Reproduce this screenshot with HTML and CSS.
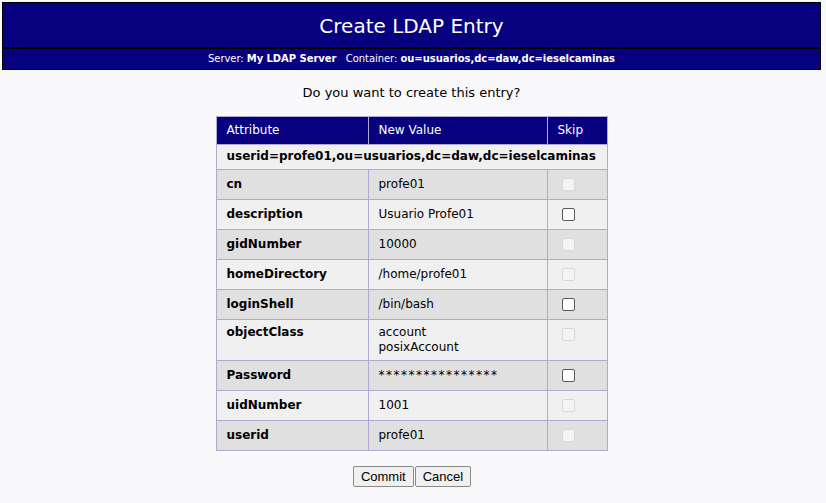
FILE: index.html
```html
<!DOCTYPE html>
<html>
<head>
<meta charset="utf-8">
<link rel="stylesheet" href="styles.css">
</head>
<body>
<div class="head">
  <div class="title">Create LDAP Entry</div>
  <div class="sub">Server: <b>My LDAP Server</b> &nbsp; Container: <b>ou=usuarios,dc=daw,dc=ieselcaminas</b></div>
</div>
<p class="question">Do you want to create this entry?</p>
<table class="entry">
  <colgroup><col class="w1"><col class="w2"><col class="w3"></colgroup>
  <tr class="th"><td>Attribute</td><td>New Value</td><td>Skip</td></tr>
  <tr class="dn"><td colspan="3">userid=profe01,ou=usuarios,dc=daw,dc=ieselcaminas</td></tr>
  <tr class="dark"><td class="c1">cn</td><td>profe01</td><td><span class="cb dis"></span></td></tr>
  <tr class="light"><td class="c1">description</td><td>Usuario Profe01</td><td><span class="cb"></span></td></tr>
  <tr class="dark"><td class="c1">gidNumber</td><td>10000</td><td><span class="cb dis"></span></td></tr>
  <tr class="light"><td class="c1">homeDirectory</td><td>/home/profe01</td><td><span class="cb dis"></span></td></tr>
  <tr class="dark"><td class="c1">loginShell</td><td>/bin/bash</td><td><span class="cb"></span></td></tr>
  <tr class="light tall"><td class="c1">objectClass</td><td>account<br>posixAccount</td><td><span class="cb dis"></span></td></tr>
  <tr class="dark"><td class="c1">Password</td><td class="pw">****************</td><td><span class="cb"></span></td></tr>
  <tr class="light"><td class="c1">uidNumber</td><td>1001</td><td><span class="cb dis"></span></td></tr>
  <tr class="dark"><td class="c1">userid</td><td>profe01</td><td><span class="cb dis"></span></td></tr>
</table>
<div class="buttons"><button class="btn">Commit</button><button class="btn">Cancel</button></div>
</body>
</html>
```
FILE: styles.css
```css
html, body { margin: 0; padding: 0; }
body {
  background: #f9f9fc;
  font-family: "DejaVu Sans", Verdana, sans-serif;
  color: #000;
  padding: 2px 5px 0 2px;
}
.head {
  background: #07007f;
  border: 1px solid #000;
  color: #fff;
}
.title {
  height: 44px;
  border-bottom: 2px solid #000;
  font-size: 20px;
  line-height: 46px;
  text-align: center;
}
.sub {
  height: 20px;
  font-size: 10px;
  line-height: 20px;
  text-align: center;
  letter-spacing: -0.05px;
}
.question {
  margin: 15px 0 0;
  font-size: 13px;
  line-height: 16px;
  text-align: center;
}
.entry {
  margin: 15px auto 0;
  border-collapse: collapse;
  table-layout: fixed;
  font-size: 12px;
  width: 391px;
}
.w1 { width: 152px; }
.w2 { width: 179px; }
.w3 { width: 60px; }
.entry td {
  border: 1px solid #aeaad2;
  padding: 0 10px 2px;
  height: 27px;
  vertical-align: middle;
  overflow: visible;
  white-space: nowrap;
}
.entry .c1 { font-weight: bold; }
.th td {
  background: #07007f;
  color: #fff;
  height: 25px;
}
.dn td {
  background: #f0f0f0;
  font-weight: bold;
  height: 22px;
  font-size: 12px;
}
.dark td { background: #e0e0e0; }
.light td { background: #f0f0f0; }
.tall td {
  height: 35px;
  vertical-align: top;
  padding-top: 5px;
  padding-bottom: 0;
  line-height: 15px;
}
.pw { letter-spacing: 1.5px; }
.cb {
  display: block;
  width: 11px;
  height: 11px;
  margin: 1px 0 0 4px;
  border: 1px solid #5a5a5a;
  border-radius: 2px;
  background: #fff;
}
.cb.dis { border-color: #d8d8d8; background: #f4f4f4; }
.tall .cb { margin-top: 3px; }
.buttons {
  margin-top: 15px;
  text-align: center;
  font-size: 0;
}
.btn {
  font-family: "Liberation Sans", Arial, sans-serif;
  font-size: 13px;
  height: 21px;
  padding: 0 7px;
  margin: 0 0 0 1px;
  background: #f0f0f0;
  border: 1px solid #8a8a8a;
  border-radius: 2px;
  color: #000;
}
```
